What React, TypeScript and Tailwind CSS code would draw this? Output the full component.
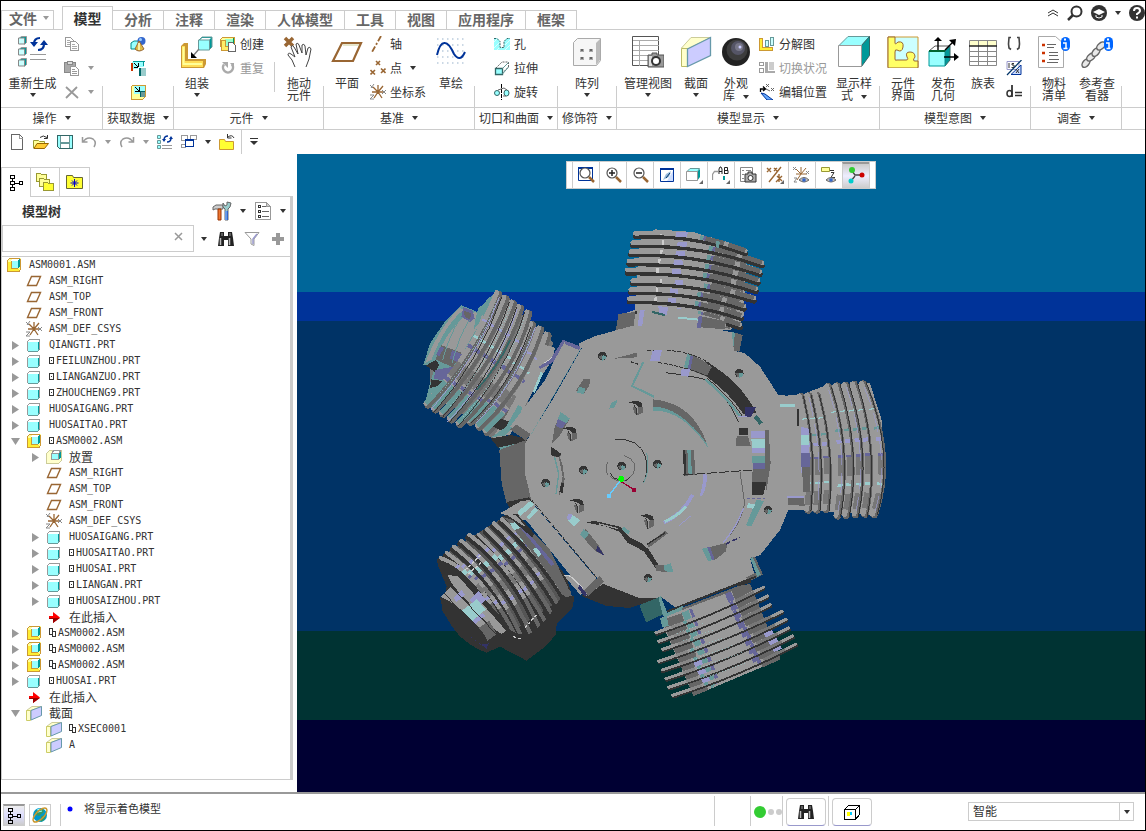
import type { ReactNode } from 'react';

/* ---------- Small drawing helpers ---------- */

function S({ children, smooth = false }: { children: ReactNode; smooth?: boolean }) {
  return (
    <svg viewBox="0 0 16 16" className="w-4 h-4 shrink-0" fill="none" shapeRendering={smooth ? 'auto' : 'crispEdges'} aria-hidden="true">
      {children}
    </svg>
  );
}

function L({ children }: { children: ReactNode }) {
  return <svg viewBox="0 0 32 32" className="w-8 h-8 shrink-0" fill="none" aria-hidden="true">{children}</svg>;
}

function Caret({ muted = false, inline = false }: { muted?: boolean; inline?: boolean }) {
  return (
    <svg viewBox="0 0 6 4" className={`w-1.5 h-1 shrink-0 ${inline ? 'inline-block ml-2' : ''}`} aria-hidden="true">
      <path d="M0 0h6L3 4z" fill={muted ? '#999' : '#333'} />
    </svg>
  );
}

/* ---------- 16px icons ---------- */

const PartIcon = () => (
  <S>
    <path d="M1 5V4l2-2h11v10l-2 3H1z" fill="#fff" />
    <path d="M12 5l2-2v9l-2 2z" fill="#099" />
    <path d="M2 5h10v9H2z" fill="#9ff" />
    <path d="M1.500 14V4.500l2-2h10V12" stroke="#999" />
    <path d="M1.500 14.500h10l2-2.500" stroke="#699" />
  </S>
);

const AsmIcon = () => (
  <S>
    <path d="M1 3l2-2h12v11l-2 3H1z" fill="#ff9" />
    <path d="M5 3l2-2h7v8l-2 2H5z" fill="#fff" />
    <path d="M6 4h6v7H6z" fill="#9ff" />
    <path d="M12 3l2-1v8l-2 1z" fill="#099" />
    <path d="M2 5h3v7h8v2H2z" fill="#fe3" />
    <path d="M1.500 14V3.500l2-2h10.500" stroke="#c93" />
    <path d="M1 14.500h12l1.500-2V2" stroke="#c93" />
    <path d="M5.500 4v7.500H12" stroke="#c93" />
  </S>
);

const PlaneIcon = () => (
  <S smooth><path d="M5.500 3.500h9l-4 9h-9z" stroke="#963" strokeWidth="1.400" /></S>
);

const CsysIcon = () => (
  <S smooth>
    <path d="M8 8V1M8 8l5-6M8 8h5M8 8l4 6M8 8H2M8 8l-4 6M3 3l5 5" stroke="#963" strokeWidth="1.300" />
    <path d="M0 1l3 3M4 0L1 4M12 6l4 4M16 6l-4 4M0 11h4l-4 4h4" stroke="#888" />
  </S>
);

const PlaceIcon = () => (
  <S>
    <path d="M.5 4.500l3-3h12v10l-3 3H.5z" fill="#ffc" stroke="#cc9" />
    <path d="M6 4l2-3h7l-2 3z" fill="#fff" stroke="#999" />
    <path d="M5.500 4.500h7v6h-7z" fill="#9ff" stroke="#999" />
    <path d="M13 4l2-2v6l-2 3z" fill="#099" />
  </S>
);

const InsertIcon = () => (
  <S smooth>
    <path d="M3 7h4V3l7 5.500L7 14v-4H3z" fill="#f00" />
    <path d="M3 9h11L7 14v-4H3z" fill="#900" />
  </S>
);

const SectionIcon = () => (
  <S smooth>
    <path d="M.5 5.500L6 1.500h9.500L5 5.500z" fill="#ffc" stroke="#cc9" />
    <path d="M.5 5.500h4v10h-4z" fill="#ffc" stroke="#cc6" />
    <path d="M5 5.500L15.500 1.500v9L5 15z" fill="#ccf" stroke="#69a" />
  </S>
);

const CopyIcon = () => (
  <S>
    <path d="M1.500 1.500h5l3 3v6h-8z" fill="#fff" stroke="#999" />
    <path d="M6.500 5.500h5l3 3v6h-8z" fill="#fff" stroke="#999" />
    <path d="M3 4.500h3M3 6.500h3M3 8.500h3M8 8.500h3M8 10.500h5M8 12.500h5" stroke="#aaa" />
  </S>
);

const PasteIcon = () => (
  <S>
    <path d="M.5 2.500h11v10H.5z" fill="#aaa" stroke="#888" />
    <path d="M3.500 1.500h5v3h-5z" fill="#ddd" stroke="#888" />
    <path d="M6.500 6.500h5l3 3v6h-8z" fill="#fff" stroke="#999" />
    <path d="M8 9.500h3M8 11.500h5M8 13.500h5" stroke="#999" />
  </S>
);

const DeleteIcon = () => <S smooth><path d="M2 3l12 11M13 3L2 14" stroke="#999" strokeWidth="1.800" /></S>;

const UserDataIcon = () => (
  <S smooth>
    <path d="M1 7l3-2h5v5l-2 3H1z" fill="#9ff" stroke="#088" />
    <circle cx="11.500" cy="5" r="4" fill="#36c" />
    <circle cx="10.500" cy="3.500" r="1.500" fill="#9cf" />
    <path d="M9 5l5 8q-5 4-9 0z" fill="#db4" stroke="#963" />
    <path d="M9 7v7" stroke="#ffc" strokeWidth="1.500" />
  </S>
);

const CopyGeomIcon = () => (
  <S>
    <path d="M1 3l2-2h11v8H1z" fill="#9ff" />
    <path d="M3 1.500h11.500M13 1v5" stroke="#099" />
    <path d="M1 3h2v8H1z" fill="#c30" />
    <path d="M4 3l4 4M8 3v4.500H4" stroke="#000" />
    <path d="M8 7h8v9H8z" fill="#fff" />
    <path d="M9 8h7v8H9z" fill="#9cc" />
    <path d="M9 8h2v8H9z" fill="#066" />
  </S>
);

const ShrinkwrapIcon = () => (
  <S>
    <path d="M1 3l2-2h12v12l-2 2H1z" fill="#ff9" stroke="#c93" />
    <path d="M4 2h11v8H4z" fill="#9ff" />
    <path d="M5 3l4 4M9 3v4.500H5" stroke="#000" />
    <path d="M10 7h5v6h-5z" fill="#066" />
    <path d="M11 8h4v5h-4z" fill="#699" />
  </S>
);

const CreateIcon = () => (
  <S>
    <path d="M.5 3.500l2-2h12v9H.5z" fill="#ff9" stroke="#c93" />
    <path d="M5 3h9v7H5z" fill="#9fc" />
    <path d="M13 2h1v8h-1z" fill="#096" />
    <path d="M1 4h4v6h4v4H1z" fill="#fe6" stroke="#c93" />
    <path d="M8.500 6.500h4l3 3v6h-7z" fill="#fff" stroke="#666" />
  </S>
);

const RepeatIcon = () => (
  <S smooth>
    <path d="M4 4.500a5 5 0 1 0 8 0" stroke="#aaa" strokeWidth="2.500" />
    <path d="M2 2h6v6zM10 3h4v5z" fill="#aaa" />
  </S>
);

const AxisIcon = () => <S smooth><path d="M11 0L2 16" stroke="#963" strokeWidth="1.800" strokeDasharray="6 2 2 2" /></S>;

const PointIcon = () => (
  <S smooth><path d="M6 1l4 4M10 1l-4 4M.5 10l4.500 4.500M5 10l-4.500 4.500M11 8.500l4.500 4.500M15.500 8.500L11 13" stroke="#963" strokeWidth="1.600" /></S>
);

const HoleIcon = () => (
  <S smooth>
    <path d="M0 2h3l3 3v9H0zM16 2h-3l-3 3v9h6z" fill="#9ff" />
    <path d="M6 12h4v2H6z" fill="#9ff" />
    <path d="M0 6l4-4M0 12l6-6M3 14l4-4M10 10l6-6M11 14l5-5" stroke="#dff" />
    <path d="M0 2.500h3l3 3v6h4v-6l3-3h3" stroke="#366" strokeDasharray="2 1" />
  </S>
);

const ExtrudeIcon = () => (
  <S smooth>
    <path d="M2 8l6-6h6.500v5l-6 6" fill="#fff" stroke="#666" strokeDasharray="2 1" />
    <path d="M1.500 8.500h7v6h-7z" fill="#9ff" stroke="#366" strokeWidth="1.300" />
    <path d="M8.500 8.500l6-6M8.500 14l6-7" stroke="#699" />
  </S>
);

const RevolveIcon = () => (
  <S smooth>
    <path d="M7.500 0v16" stroke="#000" strokeDasharray="4 1" />
    <ellipse cx="3" cy="9" rx="2.500" ry="2.500" fill="#9ff" stroke="#366" />
    <ellipse cx="12.500" cy="9" rx="2.500" ry="3" fill="#9ff" stroke="#366" />
    <path d="M4 6l6-2 3 2M9 12h3" stroke="#666" />
  </S>
);

const ExplodeIcon = () => (
  <S>
    <path d="M.5 2.500h3v9h10v3H.5z" fill="#fe3" stroke="#c93" />
    <path d="M6.500 4.500h3v6h-3zM11.500 1.500h3v8h-3z" fill="#cff" stroke="#699" />
  </S>
);

const ToggleStateIcon = () => (
  <S>
    <path d="M.5 2.500h4v3h-4zM.5 8.500h4v4h-4z" stroke="#999" />
    <path d="M6 2h3v9h7v2H6z" fill="#aaa" />
    <path d="M10 2h5v8h-5z" fill="#ccc" />
  </S>
);

const EditPosIcon = () => (
  <S smooth>
    <path d="M1.500 8V5h4M4 2.500L6.500 5 4 7" stroke="#000" strokeWidth="1.300" />
    <path d="M7 0l3 3M10 0L7 3M12 4l3 3M15 4l-3 3M7 5l4 2" stroke="#666" />
    <path d="M2 9l4 1 8 6H8z" fill="#6af" stroke="#039" />
  </S>
);

const ParensIcon = () => (
  <S smooth><path d="M5 1.500H3L2.500 8 3 12l2 1.500M11 1.500h2l.5 6.500-.5 4-2 1.500" stroke="#444" strokeWidth="1.600" /></S>
);

const SwitchDimIcon = () => (
  <S smooth>
    <path d="M1 1.500h12v8H1z" fill="#fff" stroke="#99c" />
    <path d="M3 3v5M8 3.500H6V5h2v2.500H5.500" stroke="#333" />
    <path d="M15 5v9.500H5z" fill="#cdf" stroke="#039" />
    <path d="M15.500 0L1 15" stroke="#036" strokeWidth="1.200" />
    <path d="M10 9l3 4M13 9l-3 4" stroke="#333" />
  </S>
);

const DimEqIcon = () => (
  <S smooth>
    <path d="M6 1v12" stroke="#333" strokeWidth="1.800" />
    <ellipse cx="3.500" cy="9.500" rx="2.500" ry="3" stroke="#333" strokeWidth="1.500" />
    <path d="M9 8.500h7M9 11.500h7" stroke="#333" strokeWidth="1.500" />
  </S>
);

/* Quick access bar */
const NewIcon = () => (
  <S><path d="M2.500.5h8l3 3v12h-11z" fill="#fff" stroke="#666" /><path d="M10.500 1v3h3" stroke="#999" /></S>
);

const OpenIcon = () => (
  <S smooth>
    <path d="M.5 14V6.500h5l1 1h5V14z" fill="#ff9" stroke="#993" />
    <path d="M1 14.500l3-5h11.500l-4 5z" fill="#fc3" stroke="#960" />
    <path d="M7 3.500q3-3 7 0M14.500 1v3.500H11" stroke="#333" />
  </S>
);

const SaveIcon = () => (
  <S>
    <path d="M.5 1.500h15v13h-13l-2-2z" fill="#9ff" stroke="#366" />
    <path d="M4 2h8v6H4zM4 10h8v4H4z" fill="#fff" />
    <path d="M3.500 2v6.500h9V2M3.500 14v-4.500h9V14" stroke="#699" />
  </S>
);

const UndoIcon = () => <S smooth><path d="M1.500 3v5h5M2 8q4-6 10-3 4 3 1 8" stroke="#999" strokeWidth="1.500" /></S>;
const RedoIcon = () => <S smooth><path d="M14.500 3v5h-5M14 8q-4-6-10-3-4 3-1 8" stroke="#999" strokeWidth="1.500" /></S>;

const RegenSmallIcon = () => (
  <S smooth>
    <path d="M.5 1.500h3v3h-3zM.5 6.500h3v3h-3zM.5 11.500h3v3h-3z" fill="#9ff" stroke="#699" />
    <path d="M7 6q0-4 4-4M14 4q0 4-4 4" stroke="#039" strokeWidth="1.500" />
    <path d="M5 5h4L7 8zM12 5h4l-2-3z" fill="#039" />
    <path d="M5 11.500h10M5 14.500h10" stroke="#999" />
  </S>
);

const WindowsIcon = () => (
  <S>
    <path d="M.5 1.500h6v5h-6zM9.500 1.500h6v4h-6zM.5 10.500h4v3h-4z" stroke="#999" />
    <path d="M0 1h7v1H0zM9 1h7v1H9z" fill="#999" />
    <path d="M4.500 5.500h8v7h-8z" fill="#fff" stroke="#039" />
    <path d="M4 5h9v2H4z" fill="#039" />
  </S>
);

const CloseFolderIcon = () => (
  <S smooth>
    <path d="M.5 15.500v-10h5l1 2h8v8z" fill="#ff3" stroke="#c93" />
    <path d="M15 4q-2-4-6-1M8.500 0v4h4" stroke="#333" />
  </S>
);

/* Navigator */
const TreeTabIcon = () => (
  <S><path d="M2.500.5h4v3h-4zM2.500 6.500h4v3h-4zM2.500 12.500h4v3h-4zM11.500 6.500h3v3h-3zM4.500 4v2M4.500 10v2M7 8.500h4" stroke="#000" /></S>
);

const FoldersIcon = () => (
  <svg viewBox="0 0 20 20" className="w-5 h-5" fill="#ff9" stroke="#993" shapeRendering="crispEdges" aria-hidden="true">
    <path d="M1.500 9.500v-8h4l1 1h5v7z" />
    <path d="M4.500 14.500v-8h4l1 1h5v7z" />
    <path d="M8.500 18.500v-8h4l1 1h5v7z" fill="#ff3" />
  </svg>
);

const FavoritesIcon = () => (
  <svg viewBox="0 0 20 18" className="w-5 h-5" fill="none" aria-hidden="true">
    <path d="M1.500 15.500v-13h6l1 2h9v11z" fill="#ff3" stroke="#663" />
    <path d="M9.500 6v8M5.500 10h8M7 7.500l5 5M12 7.500l-5 5" stroke="#00c" />
  </svg>
);

const ToolsIcon = () => (
  <svg viewBox="0 0 20 20" className="w-5 h-5" fill="none" aria-hidden="true">
    <path d="M1 6l3-2h7v4H6L3 8 1 9z" fill="#ccc" stroke="#666" />
    <path d="M6 8h3v11H6z" fill="#e73" stroke="#930" />
    <path d="M11 2l2 3 2-1V1l4 1-1 4-2 2v11h-3V8l-2-2z" fill="#9cc" stroke="#666" />
    <path d="M13 10h3v9h-3z" fill="#36c" />
    <path d="M14 10v9" stroke="#9cf" />
  </svg>
);

const ListIcon = () => (
  <svg viewBox="0 0 18 20" className="w-[18px] h-5" fill="none" shapeRendering="crispEdges" aria-hidden="true">
    <path d="M1.500 1.500h11l4 4v13h-15z" fill="#fff" stroke="#999" />
    <path d="M12.500 1.500v4h4z" fill="#ccc" stroke="#999" />
    <path d="M4.500 4.500h2v2h-2zM4.500 9.500h2v2h-2zM4.500 14.500h2v2h-2z" stroke="#333" />
    <path d="M8 5.500h4M8 10.500h7M8 15.500h7" stroke="#666" />
  </svg>
);

const BinocularsIcon = () => (
  <svg viewBox="0 0 18 16" className="w-[18px] h-4" aria-hidden="true">
    <path d="M3 1h4v4h4V1h4l1 6 1 8h-6v-6H7v6H1l1-8z" fill="#222" />
    <path d="M3.500 7v7M12.500 7v7" stroke="#bbb" strokeWidth="1.500" />
    <path d="M5 2v3M13 2v3" stroke="#999" />
  </svg>
);

const FilterIcon = () => (
  <S smooth>
    <path d="M1 1.500h14L10 8v6.500L7 13V8z" fill="#fff" stroke="#999" />
    <path d="M9 13V8l4-5" stroke="#99c" strokeWidth="1.500" />
  </S>
);

/* ---------- 32px ribbon icons ---------- */

const MiniCube = ({ y }: { y: number }) => (
  <g>
    <path d={`M2.500 ${y + 2}l2-1.500h5v6l-2 2`} fill="#099" stroke="#999" />
    <path d={`M1.500 ${y + 2}h6v6h-6z`} fill="#cff" stroke="#888" />
  </g>
);

const RegenerateIcon = () => (
  <L>
    <MiniCube y={0} /><MiniCube y={11} /><MiniCube y={22} />
    <path d="M17 8q0-6 6-6M21 14q6 0 6-6" stroke="#039" strokeWidth="2.200" />
    <path d="M13 6h8l-4 5zM23 9h8l-4-5z" fill="#039" />
    <path d="M13 18.500h16M13 23.500h16" stroke="#999" />
  </L>
);

const AssembleIcon = () => (
  <L>
    <path d="M0 10l3-3h4v16h18v5l-2 4H0z" fill="#c93" />
    <path d="M1 10h3v15h18v6H1z" fill="#fd5" />
    <path d="M2.500 11v17H21" stroke="#ff9" strokeWidth="2" />
    <path d="M18 4l3-3h10v10l-3 3z" fill="#099" stroke="#699" />
    <path d="M19 4l2-2h9l-2 2z" fill="#fff" />
    <path d="M17.500 4h11v10h-11z" fill="#9ff" stroke="#699" />
    <path d="M18 13l-6 7" stroke="#777" strokeWidth="1.300" />
    <path d="M10 22v-6l6 6z" fill="#000" />
  </L>
);

const DragIcon = () => (
  <L>
    <path d="M2 2l8 8M10 2l-8 8" stroke="#963" strokeWidth="3.500" />
    <path d="M12 31l-3-7-4-5q0-3 3-1l4 3-4-10q1-3 3 0l4 7-2-10q2-2 3 1l3 8 0-8q2-2 3 1l1 9 2-7q2-2 3 1l-2 10-3 8" fill="#fff" stroke="#444" />
  </L>
);

const BigPlaneIcon = () => (
  <L><path d="M11 7h19l-8 18H2z" fill="#fff" stroke="#963" strokeWidth="2.200" /><path d="M12 9h16" stroke="#cc9" /></L>
);

const SketchIcon = () => (
  <L>
    {[3, 9, 15, 21, 27].map(y => (
      <path key={y} d={`M2 ${y}h29`} stroke="#bcd" strokeWidth="1.500" strokeDasharray="1.500 3.500" />
    ))}
    <path d="M2 19Q5 6 10 7q4 0 9 11 6 9 11-2" stroke="#039" strokeWidth="2" />
  </L>
);

const PatternIcon = () => (
  <L>
    <path d="M2.500 6.500l4-4h23v22l-4 5h-23z" fill="#f6f6f6" stroke="#aaa" />
    <path d="M25 7l4-4v21l-4 5z" fill="#bbb" />
    <path d="M9 13h4v3H9zM18 13h4v3h-4zM9 21h4v3H9zM18 21h4v3h-4z" fill="#aaa" />
    <path d="M10 13h2v2h-2zM19 13h2v2h-2zM10 21h2v2h-2zM19 21h2v2h-2z" fill="#666" />
  </L>
);

const ViewsIcon = () => (
  <L>
    <path d="M.5.5h26v29H.5z" fill="#fff" stroke="#555" />
    <path d="M1 4.500h26M1 9.500h26M1 14.500h26M1 19.500h26M1 24.500h26M7.500 4v26" stroke="#aaa" />
    <path d="M16 19h4v-2h5v2h7v12H16z" fill="#999" stroke="#555" />
    <path d="M17 20h3v10h-3z" fill="#ddd" />
    <circle cx="24" cy="25" r="4" fill="#fff" stroke="#333" strokeWidth="2" />
  </L>
);

const BigSectionIcon = () => (
  <L>
    <path d="M1.500 12L11 1.500h20L7 13z" fill="#ffc" stroke="#cc9" />
    <path d="M1.500 12.500h6v18h-6z" fill="#ffc" stroke="#bb6" />
    <path d="M7.500 13L30.500 1.500v18L7.500 30.500z" fill="#ccf" stroke="#69a" strokeWidth="1.300" />
  </L>
);

const SphereIcon = () => (
  <L>
    <circle cx="16" cy="16" r="14" fill="#222" />
    <circle cx="17" cy="14" r="10.500" fill="#3c3c3c" />
    <circle cx="18" cy="12" r="7" fill="#556" />
    <circle cx="19" cy="11" r="4" fill="#778" />
    <circle cx="20" cy="11" r="1.500" fill="#ccf" />
  </L>
);

const DisplayStyleIcon = () => (
  <L>
    <path d="M1 9.500l9-9h21.500l-8 9z" fill="#9ff" stroke="#699" />
    <path d="M23.500 9.500l8-9v19l-8 11z" fill="#099" stroke="#366" />
    <path d="M.5 9.500h23v21H.5z" fill="#fff" stroke="#999" />
  </L>
);

const CompInterfaceIcon = () => (
  <L>
    <path d="M1 1h30v30H1z" fill="#cff" stroke="#c93" />
    <path d="M1 1h7v6q0 2 3-1 6-1 5 5t-6 3q-2-1-2 2v7q0 2 2 1h9q3 0 1-3-2-5 3-5t5 5q-3 4 0 4h3v7H1z" fill="#ff6" stroke="#963" />
  </L>
);

const PublishIcon = () => (
  <L>
    <path d="M2 15l6-5h15l-5 5z" fill="#fff" stroke="#555" />
    <path d="M18 15l5-5v14l-5 6z" fill="#099" stroke="#366" />
    <path d="M2 15h16v15H2z" fill="#9ff" stroke="#099" />
    <path d="M2 15h16" stroke="#063" strokeWidth="2" />
    <path d="M11 14V3M18 14l9-9M17 21h12" stroke="#000" strokeWidth="1.400" />
    <path d="M7 5l4-4 4 4zM22 4l7-1-1 7zM27 17l5 4-5 4z" fill="#000" />
  </L>
);

const FamilyTableIcon = () => (
  <L>
    <path d="M2 4h28v6H2z" fill="#ffc" />
    <path d="M2.500 4.500h27v25h-27zM2 15.500h28M2 20.500h28M2 25.500h28M11.500 4v26M20.500 4v26" stroke="#888" />
    <path d="M2 10h28" stroke="#222" strokeWidth="1.500" />
  </L>
);

const InfoBadge = () => (
  <g>
    <rect x="23" y="1" width="9" height="14" rx="4.500" fill="#06f" />
    <path d="M25 7h3v5M25.500 12.500h4" stroke="#fff" strokeWidth="1.500" />
    <path d="M26 3.500h2" stroke="#fff" strokeWidth="2" />
  </g>
);

const BomIcon = () => (
  <L>
    <path d="M.5.5h17l8 7v24H.5z" fill="#fff" stroke="#aaa" />
    <path d="M4 9h3M4 17h3M4 25h3" stroke="#c30" strokeWidth="2.500" />
    <path d="M9 8.500h9M9 11.500h7M11 16.500h9M11 19.500h9M11 23.500h10M9 26.500h11" stroke="#666" />
    <InfoBadge />
  </L>
);

const RefViewerIcon = () => (
  <L>
    <g stroke="#666" strokeWidth="1.500" fill="#e8e8e8">
      <ellipse cx="5" cy="27" rx="5" ry="3" transform="rotate(-50 5 27)" />
      <ellipse cx="10" cy="21" rx="5" ry="3" transform="rotate(-40 10 21)" />
      <ellipse cx="15" cy="16" rx="5" ry="3" transform="rotate(-50 15 16)" />
      <ellipse cx="20" cy="10" rx="5" ry="3" transform="rotate(-40 20 10)" />
    </g>
    <InfoBadge />
  </L>
);

/* ---------- Ribbon ---------- */

// textWidth makes a long label wrap on to a second line
function BigButton({ icon, label, menu = false, className, textWidth }: { icon: ReactNode; label: string; menu?: boolean; className: string; textWidth?: string }) {
  return (
    <button type="button" className={`flex flex-col items-center pt-1.5 shrink-0 leading-3 ${className}`}>
      {icon}
      <span className={`mt-[9px] ${textWidth ?? 'whitespace-nowrap'}`}>
        {label}
        {menu && textWidth && <Caret inline />}
      </span>
      {menu && !textWidth && <span className="flex h-3 items-center"><Caret /></span>}
    </button>
  );
}

function SmallButton({ icon, label, title, menu = false, muted = false }: { icon: ReactNode; label?: string; title?: string; menu?: boolean; muted?: boolean }) {
  return (
    <button type="button" aria-label={title} className={`flex h-6 items-center gap-1 whitespace-nowrap ${muted ? 'text-[#999]' : ''}`}>
      {icon}
      {label}
      {menu && <span className="ml-1"><Caret muted={muted} /></span>}
    </button>
  );
}

function Group({ label, className, children }: { label: string; className: string; children: ReactNode }) {
  return (
    <>
      <section className={`flex shrink-0 flex-col ${className}`}>
        <div className="flex h-[77px] overflow-hidden">{children}</div>
        <button type="button" className="flex h-[22px] items-center justify-center gap-2 border-t border-[#ccc] pb-0.5 whitespace-nowrap">
          {label}
          <Caret />
        </button>
      </section>
      <div className="h-[43px] w-px shrink-0 self-end bg-[#ccc]" />
    </>
  );
}

const tabs = ['分析', '注释', '渲染', '人体模型', '工具', '视图', '应用程序', '框架'];

function TabRow() {
  return (
    <nav className="flex h-[29px] items-end border-b border-[#ccc] text-sm font-bold text-[#666]">
      <button type="button" className="flex h-[19px] w-[53px] items-center gap-1.5 border-t border-r border-l border-[#ccc] pb-1 pl-[7px]">
        文件<Caret muted />
      </button>
      <button type="button" className="-mb-px ml-2 h-6 w-[51px] border border-b-0 border-[#ccc] bg-white pb-0.5 leading-4 text-[#333]">模型</button>
      {tabs.map(tab => (
        <button key={tab} type="button" className="h-[19px] border-t border-r border-[#ccc] px-[11px] pb-1 leading-4">
          {tab}
        </button>
      ))}
      <div className="ml-auto flex h-7 items-center self-start pb-1">
        <button type="button" aria-label="最小化功能区" className="mr-2">
          <svg viewBox="0 0 12 8" className="h-2 w-3" fill="none" stroke="#333" aria-hidden="true"><path d="M1 4l5-3 5 3M1 7l5-3 5 3" /></svg>
        </button>
        <button type="button" aria-label="搜索" className="mr-2">
          <svg viewBox="0 0 16 16" className="h-4 w-4" fill="none" stroke="#333" aria-hidden="true"><circle cx="9.500" cy="6.500" r="5" strokeWidth="2" /><path d="M6 10l-5 5" strokeWidth="2.500" /></svg>
        </button>
        <button type="button" aria-label="学习中心" className="mr-2">
          <svg viewBox="0 0 16 16" className="h-4 w-4" aria-hidden="true"><circle cx="8" cy="8" r="8" fill="#333" /><path d="M2 7l6-3 6 3-6 3z" fill="#fff" /><path d="M5 10v2l3 1 3-1v-2" fill="none" stroke="#fff" /></svg>
        </button>
        <span className="mr-2"><Caret /></span>
        <button type="button" aria-label="帮助">
          <svg viewBox="0 0 16 16" className="h-4 w-4" fill="none" aria-hidden="true"><circle cx="8" cy="8" r="8" fill="#333" /><path d="M5 6q0-3 3-3t3 3q0 1-3 3v1M8 11.500v2" stroke="#fff" strokeWidth="2" /></svg>
        </button>
      </div>
    </nav>
  );
}

function Ribbon() {
  return (
    <div className="flex shrink-0 overflow-hidden border-b border-[#ccc]">
      <Group label="操作" className="w-[101px]">
        <BigButton icon={<RegenerateIcon />} label="重新生成" menu className="w-[63px]" />
        <div className="flex flex-col pt-0.5">
          <SmallButton icon={<CopyIcon />} title="复制" muted />
          <SmallButton icon={<PasteIcon />} title="粘贴" menu muted />
          <SmallButton icon={<DeleteIcon />} title="删除" menu muted />
        </div>
      </Group>
      <Group label="获取数据" className="w-[70px]">
        <div className="flex w-full flex-col items-center pt-0.5">
          <SmallButton icon={<UserDataIcon />} title="用户定义特征" />
          <SmallButton icon={<CopyGeomIcon />} title="复制几何" />
          <SmallButton icon={<ShrinkwrapIcon />} title="收缩包络" />
        </div>
      </Group>
      <Group label="元件" className="w-[149px]">
        <BigButton icon={<AssembleIcon />} label="组装" menu className="w-[46px]" />
        <div className="flex w-[54px] flex-col pt-0.5">
          <SmallButton icon={<CreateIcon />} label="创建" />
          <SmallButton icon={<RepeatIcon />} label="重复" muted />
        </div>
        <div className="mt-8 h-[30px] w-px bg-[#ccc]" />
        <BigButton icon={<DragIcon />} label="拖动元件" className="w-12" textWidth="w-7" />
      </Group>
      <Group label="基准" className="w-[150px]">
        <BigButton icon={<BigPlaneIcon />} label="平面" className="w-[46px]" />
        <div className="flex w-[58px] flex-col pt-0.5">
          <SmallButton icon={<AxisIcon />} label="轴" />
          <SmallButton icon={<PointIcon />} label="点" menu />
          <SmallButton icon={<CsysIcon />} label="坐标系" />
        </div>
        <BigButton icon={<SketchIcon />} label="草绘" className="w-[46px]" />
      </Group>
      <Group label="切口和曲面" className="w-[82px]">
        <div className="flex flex-col pt-0.5 pl-[19px]">
          <SmallButton icon={<HoleIcon />} label="孔" />
          <SmallButton icon={<ExtrudeIcon />} label="拉伸" />
          <SmallButton icon={<RevolveIcon />} label="旋转" />
        </div>
      </Group>
      <Group label="修饰符" className="w-[58px]">
        <BigButton icon={<PatternIcon />} label="阵列" menu className="w-full" />
      </Group>
      <Group label="模型显示" className="w-[262px]">
        <BigButton icon={<ViewsIcon />} label="管理视图" menu className="w-[62px]" />
        <BigButton icon={<BigSectionIcon />} label="截面" menu className="w-[34px]" />
        <BigButton icon={<SphereIcon />} label="外观库" menu className="w-[46px]" textWidth="w-7" />
        <div className="flex w-[70px] flex-col pt-0.5">
          <SmallButton icon={<ExplodeIcon />} label="分解图" />
          <SmallButton icon={<ToggleStateIcon />} label="切换状况" muted />
          <SmallButton icon={<EditPosIcon />} label="编辑位置" />
        </div>
        <BigButton icon={<DisplayStyleIcon />} label="显示样式" menu className="w-[50px]" textWidth="w-10" />
      </Group>
      <Group label="模型意图" className="w-[150px]">
        <BigButton icon={<CompInterfaceIcon />} label="元件界面" className="w-[46px]" textWidth="w-7" />
        <BigButton icon={<PublishIcon />} label="发布几何" className="w-[34px]" textWidth="w-7" />
        <BigButton icon={<FamilyTableIcon />} label="族表" className="w-[46px]" />
        <div className="flex flex-col pt-0.5">
          <SmallButton icon={<ParensIcon />} title="参数" />
          <SmallButton icon={<SwitchDimIcon />} title="切换尺寸" />
          <SmallButton icon={<DimEqIcon />} title="关系" />
        </div>
      </Group>
      <Group label="调查" className="w-[90px]">
        <BigButton icon={<BomIcon />} label="物料清单" className="w-[46px]" textWidth="w-7" />
        <BigButton icon={<RefViewerIcon />} label="参考查看器" className="w-10" textWidth="w-10" />
      </Group>
      <div className="mt-[77px] flex-1 border-t border-[#ccc]" />
    </div>
  );
}

function QuickAccess() {
  return (
    <div className="flex h-6 shrink-0 items-center pl-2">
      <button type="button" aria-label="新建" className="mr-2"><NewIcon /></button>
      <button type="button" aria-label="打开" className="mr-2"><OpenIcon /></button>
      <button type="button" aria-label="保存" className="mr-2"><SaveIcon /></button>
      <button type="button" aria-label="撤消" className="mr-2 flex items-center gap-2"><UndoIcon /><Caret muted /></button>
      <button type="button" aria-label="重做" className="mr-2 flex items-center gap-2"><RedoIcon /><Caret muted /></button>
      <button type="button" aria-label="重新生成" className="mr-2"><RegenSmallIcon /></button>
      <button type="button" aria-label="窗口" className="mr-2 flex items-center gap-2"><WindowsIcon /><Caret /></button>
      <button type="button" aria-label="关闭" className="mr-1.5"><CloseFolderIcon /></button>
      <div className="h-6 w-px bg-[#ccc]" />
      <button type="button" aria-label="自定义" className="ml-2">
        <svg viewBox="0 0 8 8" className="h-2 w-2" aria-hidden="true"><path d="M0 0h8v1H0zM0 3h8L4 7z" fill="#333" /></svg>
      </button>
    </div>
  );
}

/* ---------- Model tree ---------- */

interface Node {
  level: number;
  icon: 'asm' | 'part' | 'plane' | 'csys' | 'place' | 'insert' | 'section';
  name: string;
  arrow?: 'open' | 'closed';
  mark?: 'box' | 'link';
}

const icons = {
  asm: AsmIcon,
  part: PartIcon,
  plane: PlaneIcon,
  csys: CsysIcon,
  place: PlaceIcon,
  insert: InsertIcon,
  section: SectionIcon,
};

const nodes: Node[] = [
  { level: 0, icon: 'asm', name: 'ASM0001.ASM' },
  { level: 1, icon: 'plane', name: 'ASM_RIGHT' },
  { level: 1, icon: 'plane', name: 'ASM_TOP' },
  { level: 1, icon: 'plane', name: 'ASM_FRONT' },
  { level: 1, icon: 'csys', name: 'ASM_DEF_CSYS' },
  { level: 1, icon: 'part', name: 'QIANGTI.PRT', arrow: 'closed' },
  { level: 1, icon: 'part', name: 'FEILUNZHOU.PRT', arrow: 'closed', mark: 'box' },
  { level: 1, icon: 'part', name: 'LIANGANZUO.PRT', arrow: 'closed', mark: 'box' },
  { level: 1, icon: 'part', name: 'ZHOUCHENG9.PRT', arrow: 'closed', mark: 'box' },
  { level: 1, icon: 'part', name: 'HUOSAIGANG.PRT', arrow: 'closed' },
  { level: 1, icon: 'part', name: 'HUOSAITAO.PRT', arrow: 'closed' },
  { level: 1, icon: 'asm', name: 'ASM0002.ASM', arrow: 'open', mark: 'box' },
  { level: 2, icon: 'place', name: '放置', arrow: 'closed' },
  { level: 2, icon: 'plane', name: 'ASM_RIGHT' },
  { level: 2, icon: 'plane', name: 'ASM_TOP' },
  { level: 2, icon: 'plane', name: 'ASM_FRONT' },
  { level: 2, icon: 'csys', name: 'ASM_DEF_CSYS' },
  { level: 2, icon: 'part', name: 'HUOSAIGANG.PRT', arrow: 'closed' },
  { level: 2, icon: 'part', name: 'HUOSAITAO.PRT', arrow: 'closed', mark: 'box' },
  { level: 2, icon: 'part', name: 'HUOSAI.PRT', arrow: 'closed', mark: 'box' },
  { level: 2, icon: 'part', name: 'LIANGAN.PRT', arrow: 'closed', mark: 'box' },
  { level: 2, icon: 'part', name: 'HUOSAIZHOU.PRT', arrow: 'closed', mark: 'box' },
  { level: 2, icon: 'insert', name: '在此插入' },
  { level: 1, icon: 'asm', name: 'ASM0002.ASM', arrow: 'closed', mark: 'link' },
  { level: 1, icon: 'asm', name: 'ASM0002.ASM', arrow: 'closed', mark: 'link' },
  { level: 1, icon: 'asm', name: 'ASM0002.ASM', arrow: 'closed', mark: 'link' },
  { level: 1, icon: 'part', name: 'HUOSAI.PRT', arrow: 'closed', mark: 'box' },
  { level: 1, icon: 'insert', name: '在此插入' },
  { level: 1, icon: 'section', name: '截面', arrow: 'open' },
  { level: 2, icon: 'section', name: 'XSEC0001', mark: 'link' },
  { level: 2, icon: 'section', name: 'A' },
];

function TreeRow({ node }: { node: Node }) {
  const Icon = icons[node.icon];
  const isLatin = /^[A-Z]/.test(node.name);
  return (
    <li className={`flex h-4 items-center ${node.level === 2 ? 'pl-6' : 'pl-1'}`}>
      {node.level > 0 && (
        <span className="flex w-5 justify-center pr-0.5">
          {node.arrow && (
            <button type="button" aria-label={node.arrow === 'open' ? '折叠' : '展开'}>
              <svg viewBox="0 0 9 9" className="h-[9px] w-[9px]" fill="#999" aria-hidden="true">
                <path d={node.arrow === 'open' ? 'M0 1h9L4.500 8z' : 'M1 0v9l7-4.500z'} />
              </svg>
            </button>
          )}
        </span>
      )}
      <Icon />
      <span className={`ml-[7px] flex items-center whitespace-nowrap ${isLatin ? 'font-["DejaVu_Sans_Mono",monospace] text-[10px]' : 'text-xs'}`}>
        {node.mark === 'box' && (
          <svg viewBox="0 0 7 8" className="h-2 w-[7px]" fill="none" stroke="#333" shapeRendering="crispEdges" aria-hidden="true">
            <path d="M.5.5h4v6h-4zM2 3.500h1" />
          </svg>
        )}
        {node.mark === 'link' && (
          <svg viewBox="0 0 9 9" className="h-[9px] w-[9px]" fill="none" stroke="#333" shapeRendering="crispEdges" aria-hidden="true">
            <path d="M3.500 3V.5h-3v6h2M3.500 3.500h3v5h-3z" />
          </svg>
        )}
        {node.name}
      </span>
    </li>
  );
}

function Navigator() {
  return (
    <aside className="flex w-[296px] shrink-0 flex-col pt-[13px] pr-1 pb-3">
      <div className="flex h-[30px]">
        <button type="button" aria-label="模型树" className="flex w-[29px] items-center justify-center border-t border-l border-[#ccc]"><TreeTabIcon /></button>
        <button type="button" aria-label="文件夹浏览器" className="flex w-[30px] items-center justify-center border border-[#ccc]"><FoldersIcon /></button>
        <button type="button" aria-label="收藏夹" className="flex w-[30px] items-center justify-center border border-l-0 border-[#ccc]"><FavoritesIcon /></button>
        <div className="flex-1 border-b border-[#ccc]" />
      </div>
      <div className="flex flex-1 flex-col border-r-[3px] border-b border-l border-[#ccc]">
        <div className="flex h-7 items-center pr-1 pl-5">
          <h2 className="flex-1 text-[13px] font-bold">模型树</h2>
          <button type="button" aria-label="设置" className="mr-2 flex items-center gap-2"><ToolsIcon /><Caret /></button>
          <button type="button" aria-label="显示" className="flex items-center gap-2"><ListIcon /><Caret /></button>
        </div>
        <div className="flex items-center">
          <div className="flex h-[27px] w-48 items-center border border-[#ccc]">
            <input type="text" aria-label="搜索模型树" className="h-full min-w-0 flex-1 px-1 outline-none" />
            <button type="button" aria-label="清除" className="mr-2.5 mb-1">
              <svg viewBox="0 0 9 9" className="h-[9px] w-[9px]" stroke="#999" strokeWidth="1.500" aria-hidden="true"><path d="M1 1l7 7M8 1L1 8" /></svg>
            </button>
          </div>
          <button type="button" aria-label="搜索选项" className="mr-2.5 ml-[7px]"><Caret /></button>
          <button type="button" aria-label="查找" className="mr-[9px]"><BinocularsIcon /></button>
          <button type="button" aria-label="过滤器" className="mr-3"><FilterIcon /></button>
          <button type="button" aria-label="添加">
            <svg viewBox="0 0 12 12" className="h-3 w-3" stroke="#999" strokeWidth="4" aria-hidden="true"><path d="M6 0v12M0 6h12" /></svg>
          </button>
        </div>
        <ul className="mt-1 flex-1 border-t border-[#ccc]">
          {nodes.map((node, i) => <TreeRow key={i} node={node} />)}
        </ul>
      </div>
    </aside>
  );
}

/* ---------- Engine model ---------- */

// x1, y1, control x, control y, x2, y2
type Fin = [number, number, number, number, number, number];
// start, length (percent along the fin), colour
type Band = [number, number, string];

function Fins({ fins, width, shade, dx, dy, bands, shadow = '#333' }: { fins: Fin[]; width: number; shade: number; dx: number; dy: number; bands: Band[]; shadow?: string }) {
  return (
    <g fill="none" strokeLinecap="round">
      {fins.map(([x1, y1, cx, cy, x2, y2], i) => {
        const d = `M${x1} ${y1}Q${cx} ${cy} ${x2} ${y2}`;
        return (
          <g key={i}>
            <path d={d} transform={`translate(${dx} ${dy})`} stroke={shadow} strokeWidth={shade} />
            <path d={d} stroke="#999" strokeWidth={width} />
            {bands.map(([start, len, color], j) => (
              <path key={j} d={d} pathLength={100} stroke={color} strokeWidth={width} strokeLinecap="butt" strokeDasharray={`0 ${start} ${len} 200`} />
            ))}
          </g>
        );
      })}
    </g>
  );
}

const topFins: Fin[] = [
  [684, 268, 850, 262, 990, 314],
  [658, 236, 840, 232, 994, 286],
  [662, 209, 850, 204, 1002, 258],
  [668, 182, 860, 178, 1032, 234],
  [652, 150, 860, 144, 1038, 206],
  [657, 123, 860, 116, 1044, 180],
  [663, 95, 860, 88, 1050, 154],
  [668, 68, 870, 60, 1056, 128],
  [676, 40, 850, 30, 1006, 92],
];

const upperLeftFins: Fin[] = [
  [408, 342, 350, 520, 226, 632],
  [386, 324, 330, 500, 202, 616],
  [362, 310, 300, 490, 176, 602],
  [350, 276, 300, 460, 144, 608],
  [326, 260, 260, 450, 118, 594],
  [304, 246, 240, 430, 94, 578],
  [282, 232, 210, 420, 70, 564],
  [260, 218, 190, 400, 48, 550],
];

const rightFins: Fin[] = [
  [1168, 528, 1210, 700, 1190, 868],
  [1192, 526, 1236, 700, 1216, 868],
  [1216, 524, 1264, 700, 1244, 866],
  [1250, 498, 1316, 700, 1278, 886],
  [1276, 496, 1342, 700, 1304, 884],
  [1302, 494, 1372, 700, 1332, 882],
  [1328, 492, 1398, 700, 1360, 880],
  [1354, 490, 1450, 700, 1388, 882],
];

const lowerLeftFins: Fin[] = [
  [298, 890, 400, 1000, 478, 1120],
  [276, 898, 390, 1000, 468, 1132],
  [252, 910, 360, 1010, 448, 1160],
  [230, 928, 340, 1030, 430, 1190],
  [206, 944, 320, 1050, 410, 1212],
  [178, 944, 310, 1040, 392, 1232],
  [154, 962, 290, 1070, 366, 1252],
  [132, 980, 260, 1080, 340, 1262],
  [110, 998, 240, 1090, 318, 1252],
  [92, 1014, 200, 1050, 284, 1230],
];

const lowerRightFins: Fin[] = [
  [738, 1238, 900, 1184, 1060, 1102],
  [746, 1264, 910, 1210, 1072, 1128],
  [758, 1288, 920, 1236, 1080, 1154],
  [746, 1324, 930, 1264, 1116, 1174],
  [756, 1350, 940, 1292, 1128, 1198],
  [768, 1376, 950, 1318, 1136, 1224],
  [776, 1402, 960, 1344, 1148, 1248],
  [788, 1426, 970, 1368, 1158, 1272],
];

const holes = [[577, 408], [988, 460], [742, 732], [520, 750], [407, 789], [635, 738], [1074, 870], [714, 1074]];
const bolts = [[678, 562], [480, 640], [502, 856], [712, 902]];

function EngineModel() {
  return (
    <svg viewBox="297 154 848 638" preserveAspectRatio="xMidYMid slice" className="absolute inset-0 h-full w-full" role="img" aria-label="发动机装配模型" shapeRendering="crispEdges">
      <rect x="297" y="154" width="848" height="138" fill="#069" />
      <rect x="297" y="292" width="848" height="29" fill="#039" />
      <rect x="297" y="321" width="848" height="310" fill="#036" />
      <rect x="297" y="631" width="848" height="89" fill="#033" />
      <rect x="297" y="720" width="848" height="72" fill="#003" />

      {/* Drawn at three times the screen size */}
      <g transform="translate(410 220) scale(.33333)">
        {/* Top cylinder */}
        <path d="M625 285L675 270 690 60 735 28 850 36 920 60 1010 95 1000 300 960 330 620 330z" fill="#999" />
        <path d="M920 62L1012 95 1000 210 960 326 880 318 905 190z" fill="#666" />
        <path d="M625 282L675 276 672 318 618 330z" fill="#666" />
        <Fins fins={topFins} width={14} shade={16} dx={0} dy={9} bands={[[22, 2, '#ccc'], [34, 7, '#99c'], [58, 3, '#699'], [61, 2, '#669'], [63, 37, '#666'], [80, 4, '#999']]} />
        <path d="M735 28L790 32 800 38 830 42 828 52 796 50 735 38z" fill="#999" />
        <path d="M800 36h34l-4 16h-34z" fill="#99c" />
        <path d="M918 62l12 3-4 20-8-4z" fill="#699" />
        <path d="M682 262L770 258 880 285 950 305 945 330 675 322z" fill="#999" />
        <path d="M690 270h14l-8 52h-14zM745 258l30 4-6 24-22-4z" fill="#99c" />
        <path d="M725 272l40 10v7l-40-10z" fill="#366" />
        <path d="M805 290l60 6v6l-60-6z" fill="#9cc" />
        <path d="M866 288l12 2-4 36h-14z" fill="#669" />
        <path d="M878 290l70 14-4 24-72-6z" fill="#666" />

        {/* Right cylinder */}
        <path d="M1100 530L1180 522 1250 495 1380 490 1415 600 1420 740 1390 885 1180 870 1135 870z" fill="#999" />
        <Fins fins={rightFins} width={15} shade={22} dx={5} dy={2} shadow="#666" bands={[[20, 1, '#9cc'], [34, 2, '#699'], [42, 3, '#99c'], [54, 2, '#669'], [56, 14, '#777'], [76, 2, '#9cc'], [84, 12, '#777']]} />
        <g fill="none" stroke="#333" strokeWidth="3">
          <path d="M1368 486Q1455 700 1402 885M1342 488Q1408 700 1372 890M1316 490Q1384 700 1345 890M1290 492Q1354 700 1318 890M1264 500Q1326 700 1292 890M1228 524Q1276 700 1258 872M1204 526Q1248 700 1230 872M1180 528Q1222 700 1203 872" />
        </g>
        <g fill="none" stroke="#99c" strokeWidth="2" strokeDasharray="60 24">
          <path d="M1362 500Q1446 700 1396 872M1309 500Q1376 700 1338 872M1256 510Q1318 700 1284 872M1196 530Q1240 700 1222 860" />
        </g>

        {/* Upper left cylinder */}
        <path d="M235 240L262 215 410 350 430 370 330 600 245 655 60 500 60 440z" fill="#777" />
        <path d="M155 256L200 275 235 235 262 215 200 420 90 560 45 550 60 490 75 440 40 435 60 370 105 305z" fill="#699" />
        <path d="M150 264Q90 316 46 428L64 420Q104 316 160 270z" fill="#999" />
        <path d="M160 290Q112 340 94 380L150 420Q180 350 226 290L196 276z" fill="#999" />
        <path d="M160 262l28 10 6 24-14 10-26-16z" fill="#669" />
        <path d="M162 272l22 8-4 18-16-8z" fill="#666" />
        <path d="M206 262l22-14-20 60-16 20 4-30z" fill="#699" />
        <path d="M94 376l60 22-26 44-52-24z" fill="#666" />
        <path d="M90 380l12 4-14 24-10-4zM126 390l32 14-14 24-24-12z" fill="#669" />
        <path d="M150 296Q116 350 98 420M178 300Q146 350 126 430" fill="none" stroke="#699" strokeWidth="3" />
        <path d="M48 436l30-16 10 14-12 22-14-8zM64 478l50 8-20 10-34 8z" fill="#333" />
        <path d="M76 450l54-10-16 44-42-8z" fill="#669" />
        <Fins fins={upperLeftFins} width={15} shade={22} dx={6} dy={5} shadow="#666" bands={[[22, 2, '#99c'], [36, 2, '#9cc'], [44, 3, '#669'], [60, 12, '#777'], [74, 3, '#669'], [78, 22, '#699']]} />
        <g fill="none" stroke="#99c" strokeWidth="3">
          <path d="M268 232Q206 410 62 570M322 268Q262 450 112 606M376 322Q314 500 196 610" />
        </g>
        <g fill="none" stroke="#333" strokeWidth="3">
          <path d="M275 232Q210 420 70 580M298 246Q236 430 95 595M320 262Q262 445 118 608M345 275Q286 462 145 618M362 322Q300 500 185 608" />
        </g>
        <path d="M300 360Q270 430 200 510" fill="none" stroke="#366" strokeWidth="5" />
        <g fill="none" stroke="#9cc" strokeWidth="2" strokeDasharray="4 5">
          <path d="M262 240Q200 400 90 520M300 262Q240 420 120 560M340 300Q290 450 160 590M370 330Q310 500 200 600" />
        </g>
        <path d="M405 375l30 8-10 40-40 60-48 90-36 70-55 15 30-50z" fill="#999" />
        <path d="M392 455l8 4-26 60-6-4z" fill="#9cc" />
        <path d="M400 430l38-28 8 4-38 28z" fill="#ccc" />
        <path d="M250 620l22-24 24 8-12 34zM242 655l60-10 58 14-8 20-86 6z" fill="#333" />
        <path d="M325 555l12 8-16 44-36 40-40 4 42-30z" fill="#699" />
        <path d="M268 682l82-18-2 22-76 14z" fill="#699" />

        {/* Lower left cylinder */}
        <path d="M85 1015L250 910 320 880 470 1070 490 1145 487 1165 440 1210 438 1240 405 1280 350 1322 270 1280 230 1298 150 1250 95 1170 110 1100 85 1040z" fill="#333" />
        <path d="M110 998L300 880 420 1010 480 1120 300 1240z" fill="#555" />
        <Fins fins={lowerLeftFins} width={12} shade={16} dx={-4} dy={9} bands={[[18, 3, '#99c'], [26, 5, '#9cc'], [34, 3, '#669'], [46, 10, '#777'], [62, 3, '#99c'], [70, 30, '#666']]} />
        <path d="M494 1130L462 1118 440 1152 420 1184 400 1206 380 1228 352 1246 320 1240 286 1222 262 1262 350 1322 380 1290 405 1280 438 1244 440 1212 487 1165z" fill="#333" />
        <path d="M280 888l30-10 110 110 66 140-20 4-80-110z" fill="#666" />
        <path d="M300 910l18-4 14 18-20 6zM368 988l20-10 12 18-14 16z" fill="#9cc" />
        <path d="M318 908l16 6 100 118-10 6z" fill="#669" />
        <path d="M112 1064l34 6 146 160-18 12-30-20-114-124z" fill="#999" />
        <path d="M146 1070l20 0 132 150-8 14z" fill="#333" />
        <path d="M180 1140l26-26 22 24-26 26z" fill="#99c" />
        <path d="M92 1130l30-30 136 140-30 24z" fill="#999" />
        <path d="M200 1228l38-26 22 40-32 24z" fill="#666" />
        <path d="M156 1172l44-34 28 30-40 34z" fill="#9cc" />
        <path d="M130 1134l24-24 12 14-26 22z" fill="#99c" />
        <path d="M188 1202l30-24 8 10-30 24z" fill="#99c" />
        <path d="M104 1120l120 136M124 1100l136 144" stroke="#333" strokeWidth="3" />
        <path d="M90 1132Q100 1200 160 1258 200 1290 232 1298 250 1270 200 1216 130 1140 90 1132z" fill="#333" />
        <path d="M158 1232l54 42 24-4-6 16z" fill="#336" />
        <path d="M165 1050l48-46M175 1062l40-36M345 1222l34-36M310 1250l24 8" stroke="#ccc" strokeWidth="4" strokeDasharray="9 5" />

        {/* Lower right cylinder */}
        <path d="M750 1195L1020 1090 1112 1318 850 1428z" fill="#999" />
        <path d="M755 1200l60-20 80 230-45 18zM965 1114l55-24 92 228-54 24z" fill="#666" />
        <path d="M815 1178l20-8 84 220-14 16zM750 1196l20-8 6 30-18 4z" fill="#699" />
        <path d="M838 1168l8-2 84 220-10 6zM945 1122l18-8 90 216-18 12z" fill="#669" />
        <path d="M846 1320l24-10 34 80-20 10zM1060 1240l26-10 30 56-24 10z" fill="#99c" />
        <Fins fins={lowerRightFins} width={9} shade={9} dx={2} dy={5} bands={[[14, 9, '#888'], [25, 3, '#699'], [68, 3, '#669'], [73, 18, '#777']]} />
        <g stroke="#9cc" strokeWidth="2" strokeDasharray="3 7">
          <path d="M800 1240l80-30M820 1262l90-32M840 1290l100-36M850 1318l120-42M860 1346l140-50M880 1374l130-46" />
        </g>

        {/* Crankcase */}
        <path d="M268 690L348 660 370 840 290 850 275 790z" fill="#666" />
        <path d="M290 846L355 832 375 845 305 880z" fill="#333" />
        <path d="M515 1128L580 1090 740 1130 740 1136 660 1164 590 1158z" fill="#333" />
        <path d="M965 335l33 10-10 50-22-2z" fill="#666" />
        <path d="M965 335l10 4-6 52-6-2z" fill="#699" />
        <path d="M462 362L515 382 420 545 358 655 345 640 300 620 405 480z" fill="#999" />
        <path d="M458 360l8 2-36 64-40 22-4-8 34-20zM466 362l46 18-6 10-42-18z" fill="#669" />
        <path d="M300 628l20-14 42 28-14 20z" fill="#666" />
        <path d="M515 385L505 372 550 350 665 318 905 325 965 337 972 392 1005 400 1050 440 1105 525 1170 530 1175 815 1183 860 1135 870 1110 930 1050 1006 1020 1015 1035 1070 800 1165 755 1132 690 1135 575 1090 365 845 345 760 345 670 430 535z" fill="#999" />
        <path d="M512 388L362 645" stroke="#699" strokeWidth="2" strokeDasharray="7 4" />
        <path d="M270 880l62-36 28-4 215 254-45 34-180-226z" fill="#999" />
        <path d="M365 840L578 1094" stroke="#333" strokeWidth="3" strokeDasharray="12 4" />
        <path d="M322 876l40-34 10 12-42 34zM350 892l24-30 10 10-26 26z" fill="#9cc" />
        <path d="M272 888l50-6 52 60-8 10-60-52z" fill="#333" />
        <path d="M290 884l28 2 30 34-14-6z" fill="#999" />
        <path d="M460 1064l20 2 42 42-10 18-34-40z" fill="#999" />
        <path d="M462 1066l18 2 38 36" fill="none" stroke="#ccc" strokeWidth="4" />
        <path d="M522 1110l46-42 14 16-46 44z" fill="#666" />
        <path d="M508 1094l24 30-8 6-20-26z" fill="#336" />
        <path d="M688 1155l66-26 14 50-60 28z" fill="#366" />
        <path d="M752 1128l16 40 4 10-14 6-12-50z" fill="#699" />
        <path d="M1035 1010l24 54-44 22-6-14 34-16-20-44z" fill="#666" />
        <path d="M1020 1014l8-2 24 52-10 6z" fill="#699" />
        <path d="M770 1175L1038 1070" stroke="#333" strokeWidth="6" />
        <path d="M758 1184l60-26 4 10-58 24z" fill="#699" />
        <path d="M815 1164l190-74 2 8-190 72z" fill="#666" />
        <path d="M980 1094l44-18v12l-44 12z" fill="#333" />
        <path d="M1132 828h50l2 30-50-4z" fill="#666" />
        <path d="M1132 828h50v6h-50z" fill="#99c" />
        <path d="M1110 553h46v7h-46z" fill="#9cc" />
        <path d="M1160 568h7v50h-7z" fill="#333" />
        <path d="M1172 620l24 6 4 130-28 4z" fill="#99c" />
        <path d="M1172 645h24v30h-24z" fill="#9cc" />
        <path d="M1173 700h26v40h-26z" fill="#669" />
        <path d="M1176 742h24v74h-20z" fill="#666" />

        {/* Ring slot */}
        <path d="M612 416l68-18v14z" fill="#666" />
        <path d="M690 393Q860 380 930 450 1050 540 1077 660L1080 740Q1075 830 1020 918L1008 914Q1035 830 1026 740L1020 650Q1000 590 940 520 880 450 790 440L690 422z" fill="#999" />
        <path d="M728 390h28l-8 34h-28z" fill="#99c" />
        <path d="M832 402Q870 410 905 442L900 474 826 444z" fill="#666" />
        <path d="M832 402l10 4-8 40-12-4z" fill="#699" />
        <path d="M842 406l7 3-8 40-8-3z" fill="#669" />
        <path d="M880 420Q990 480 1040 580L1000 582Q960 520 890 470L905 442z" fill="#333" />
        <path d="M1006 562h32l-14 28h-20z" fill="#336" />
        <path d="M890 474Q960 530 998 590M768 458Q860 470 888 480 950 520 985 605" fill="none" stroke="#333" strokeWidth="3" />
        <path d="M886 478Q950 530 990 590" fill="none" stroke="#699" strokeWidth="7" />
        <path d="M815 448h26l-6 22-24-4z" fill="#99c" />
        <path d="M712 392h20M770 391Q850 395 905 435M745 428Q830 440 900 472" fill="none" stroke="#333" strokeWidth="3" strokeDasharray="12 4" />
        <path d="M1040 584l18 24-10 6-16-20z" fill="#366" />
        <path d="M980 648h34l8 30h-44z" fill="#666" />
        <path d="M988 590l24 0 4 28-26 6z" fill="#999" />
        <path d="M984 590h26" stroke="#99c" strokeWidth="4" />
        <path d="M986 624h28v20h-28z" fill="#333" />
        <path d="M1022 634h42l6 20h-46z" fill="#99c" />
        <path d="M1024 656h46l4 28h-48z" fill="#9cc" />
        <path d="M1026 684h48l1 16h-49z" fill="#99c" />
        <path d="M1027 708h48v20h-48z" fill="#699" />
        <path d="M1028 728h48l-2 20h-46z" fill="#669" />
        <path d="M1028 748h47l-3 40h-46z" fill="#666" />
        <path d="M1026 786h44l-10 38h-34z" fill="#333" />
        <path d="M1064 630l12 0 6 100-14 90z" fill="#666" />
        <path d="M1040 838l22 6-38 74-16-2z" fill="#699" />
        <path d="M1014 850l22 2-6 14-20-2z" fill="#9cc" />
        <path d="M1010 836h56" stroke="#669" strokeWidth="5" strokeDasharray="10 6" />
        <path d="M990 755L1004 850Q990 920 945 960" fill="none" stroke="#666" strokeWidth="3" />
        <path d="M1000 865Q980 920 940 968" fill="none" stroke="#99c" strokeWidth="4" />
        <path d="M880 986l72-18-4 26-34 26-20-8z" fill="#666" />
        <path d="M876 986l16-4 18 38-16 4z" fill="#699" />
        <path d="M892 982l8-2 14 38-8 2z" fill="#669" />
        <path d="M948 972l42-20" stroke="#336" strokeWidth="5" strokeDasharray="14 8" />

        {/* Face details */}
        <path d="M662 425l28 10" stroke="#333" strokeWidth="4" strokeDasharray="10 5" />
        <path d="M700 426l-34 72 66 32" fill="none" stroke="#699" strokeWidth="6" />
        <path d="M730 538Q850 550 896 686 820 570 730 572z" fill="#699" />
        <path d="M730 538Q850 550 890 670 810 560 730 560z" fill="#666" />
        <path d="M820 690h32l4 74-34 4z" fill="#666" />
        <path d="M820 690h6l3 76-8 1z" fill="#333" />
        <path d="M832 690h10l4 74-10 2z" fill="#699" />
        <path d="M820 765L1028 750" stroke="#333" strokeWidth="3" strokeDasharray="28 8" />
        <path d="M880 762Q880 800 868 828L878 826Q890 800 892 764z" fill="#99c" />
        <path d="M848 824Q820 880 762 908" fill="none" stroke="#99c" strokeWidth="11" />
        <path d="M828 860Q800 890 764 905" fill="none" stroke="#9cc" strokeWidth="9" />
        <path d="M842 888l-34 28" stroke="#99c" strokeWidth="3" />
        <path d="M520 478l20 -2-2 22-16 22-24-8z" fill="#666" />
        <path d="M508 500l18 6-4 16-22-4zM604 548l20-10-10 24-16 4z" fill="#699" />
        <path d="M454 578l26 18-30 50-24 24 8-50z" fill="#666" />
        <path d="M452 576l28 20-12 14-24-14z" fill="#699" />
        <path d="M444 596l24 14-12 16-18-8z" fill="#669" />
        <path d="M424 680l30 22-4 10 8 26 6 40-16 50-10-20 10-40-12-46z" fill="#666" />
        <path d="M424 680l30 22-8 10-22-6zM440 786l22 4-4 30-16-8z" fill="#333" />
        <path d="M432 710h14l12 60-12 54-8-20 4-50z" fill="#999" />
        <path d="M434 712l12 50-8 60" fill="none" stroke="#699" strokeWidth="4" />
        <path d="M486 884l24 16-18 20-18-20z" fill="#9cc" />
        <path d="M476 880l12 4-10 18-8-6z" fill="#99c" />
        <path d="M526 926l40 50 18 32-26-14-48-50z" fill="#666" />
        <path d="M520 928l18 12-14 18-14-14z" fill="#699" />
        <path d="M562 976l22 32-26-16z" fill="#336" />
        <path d="M530 908l20-6 80 18 26 30 36 18 24 20 34 54-10 8-38-56-50-26-22-32-40-16z" fill="#333" />
        <path d="M568 912l56 14M650 938l24 18" stroke="#999" strokeWidth="4" />
        <path d="M640 920l20 14-6 10-20-16z" fill="#699" />
        <path d="M714 978l56-42" stroke="#666" strokeWidth="11" />
        <path d="M710 974l56-36" stroke="#333" strokeWidth="4" />
        <path d="M736 1036h44l10 20-52-2z" fill="#666" />
        <path d="M762 1036l20-6 8 26-26-2z" fill="#699" />
        <g fill="none" stroke="#333" strokeWidth="3">
          <path d="M614 658Q690 655 706 710 718 750 700 790" />
          <path d="M642 706Q690 725 668 764 640 800 600 770M592 765Q585 745 592 725" stroke="#666" />
          <path d="M600 758Q610 780 635 780M660 772L645 784" />
        </g>
        <path d="M710 700Q722 750 700 790" fill="none" stroke="#699" strokeWidth="3" />

        {holes.map(([x, y]) => (
          <g key={`${x}-${y}`}>
            <circle cx={x} cy={y} r="13" fill="#333" />
            <path d={`M${x - 8} ${y + 2}l10 -4 9 2 -1 8 -10 6z`} fill="#699" />
            <path d={`M${x - 12} ${y}l10 -2 2 12 -6 0z`} fill="#666" />
          </g>
        ))}
        {bolts.map(([x, y]) => (
          <g key={`${x}-${y}`}>
            <path d={`M${x - 22} ${y - 14}q20 -10 38 0l4 14 -10 0q-10 -12 -32 -14z`} fill="#333" />
            <path d={`M${x - 10} ${y}l8 -4 6 28 -8 -6zM${x + 6} ${y}l14 -2v18l-16 8z`} fill="#666" />
            <path d={`M${x - 6} ${y - 8}q10 10 8 32`} fill="none" stroke="#333" strokeWidth="3" />
          </g>
        ))}

        {/* Spin centre */}
        <path d="M634 777L597 827" stroke="#6cf" strokeWidth="4" />
        <path d="M634 785L672 809" stroke="#903" strokeWidth="4" />
        <circle cx="634" cy="777" r="9" fill="#0f0" />
        <circle cx="597" cy="828" r="7" fill="#6cf" />
        <circle cx="672" cy="810" r="7" fill="#903" />
      </g>
    </svg>
  );
}

/* ---------- Graphics toolbar ---------- */

const Lens = ({ sign }: { sign?: string }) => (
  <>
    <circle cx="8" cy="7" r="5" fill="#fff" stroke="#555" strokeWidth="1.200" />
    <path d="M12 11l5 5" stroke="#963" strokeWidth="2.500" />
    {sign && <path d={sign} stroke="#222" strokeWidth="1.500" />}
  </>
);

const Eye = () => (
  <>
    <path d="M6 14q5-5 10 0-5 4-10 0z" fill="#bbb" stroke="#666" />
    <circle cx="11" cy="14" r="1.800" fill="#36c" />
  </>
);

const viewTools: { name: string; art: ReactNode; active?: boolean }[] = [
  { name: '重新调整', art: <><path d="M1.500 1.500h14v13h-14z" fill="#fff" stroke="#039" /><path d="M1 1h15v2H1z" fill="#039" /><Lens /></> },
  { name: '放大', art: <Lens sign="M5 7h6M8 4v6" /> },
  { name: '缩小', art: <Lens sign="M5 7h6" /> },
  { name: '重画', art: <><path d="M2.500 2.500h13v13h-13z" fill="#fff" stroke="#039" /><path d="M2 2h14v2H2z" fill="#039" /><path d="M15 5v10H9z" fill="#cdf" /><path d="M5 14l3-6 5-3-2 6z" fill="#9bd" /><path d="M8 12l4-5" stroke="#036" /></> },
  { name: '显示样式', art: <><path d="M2 5.500l3-3h9.500l-2 3z" fill="#9ff" stroke="#699" /><path d="M12 6l3-3v8l-3 4z" fill="#099" /><path d="M1.500 5.500h11v9h-11z" fill="#fff" stroke="#999" /><path d="M18 14v4h-4z" fill="#666" /></> },
  { name: '已命名视图', art: <><path d="M.5 14V8.500l2-3H6" stroke="#999" strokeWidth="1.300" /><path d="M7 8V3l1-2h1l1 2v5M7 5.500h3M12.500 8V1.500h3v3h-3M12.500 4.500h3.500v3h-3.500" stroke="#222" /><path d="M11 10h2v4h-2z" fill="#099" /><path d="M18 14v4h-4z" fill="#666" /></> },
  { name: '视图管理器', art: <><path d="M1.500 1.500h12v14h-12zM3 4.500h2M3 8.500h2M3 12.500h2M7 4.500h5" stroke="#888" /><path d="M6 8h3V6h4v2h4v8H6z" fill="#aaa" stroke="#333" /><circle cx="11.500" cy="12" r="2.500" fill="#fff" stroke="#333" /></> },
  { name: '基准显示过滤器', art: <><path d="M1 2l4 4M5 2L1 6M8 2l3 3M11 2L8 5M15 1L3 16M11 10l5 5M16 10l-6 6M13 8v8" stroke="#963" strokeWidth="1.400" /><path d="M18 14v4h-4z" fill="#666" /></> },
  { name: '点显示', art: <><path d="M8 8V1M8 8l5-6M8 8l6 0M8 8H3M8 8l-4 6M3 3l5 5" stroke="#963" /><path d="M0 1l3 3M3 1L0 4M13 5l3 3M16 5l-3 3M1 12h3l-3 4h3" stroke="#888" /><Eye /></> },
  { name: '注释显示', art: <><path d="M1.500 1.500h8v4h-8z" fill="#ff9" stroke="#993" /><path d="M10 4.500h4M11 6.500h3l-3 5h4" stroke="#333" /><Eye /></> },
  { name: '旋转中心', active: true, art: <><path d="M5 4l3 4h6M8 9l-4 5" stroke="#444" strokeWidth="1.300" /><circle cx="5" cy="3" r="3" fill="#3c3" /><circle cx="15" cy="8" r="2.500" fill="#c00" /><circle cx="4" cy="14" r="2.500" fill="#0cc" /></> },
];

function ViewToolbar() {
  return (
    <div className="relative mt-[7px] flex h-7 border border-[#ccc] bg-white px-[5px]">
      {viewTools.map(tool => (
        <button
          key={tool.name}
          type="button"
          aria-label={tool.name}
          className={`flex w-[27px] items-center justify-center border-l border-[#ccc] ${tool.active ? 'border-t-2 border-t-[#999] bg-linear-to-b from-[#ccc] via-[#eef] to-[#ccc]' : ''}`}
        >
          <svg viewBox="0 0 18 18" className="h-[18px] w-[18px]" fill="none" aria-hidden="true">{tool.art}</svg>
        </button>
      ))}
      <div className="w-px bg-[#ccc]" />
    </div>
  );
}

/* ---------- Status bar ---------- */

function StatusBar() {
  return (
    <footer className="flex h-[38px] shrink-0 items-start border-t-2 border-[#999] pr-[11px]">
      <button type="button" aria-label="导航器" className="mt-2.5 ml-0.5 flex h-[22px] w-[22px] items-center justify-center border border-t-2 border-[#ccc] border-t-[#999] bg-linear-to-b from-[#eee] via-[#ddf] to-[#ccc]"><TreeTabIcon /></button>
      <button type="button" aria-label="浏览器" className="mt-2.5 ml-1 flex h-[22px] w-[22px] items-center justify-center border border-[#ccc]">
        <svg viewBox="0 0 18 18" className="h-[18px] w-[18px]" fill="none" aria-hidden="true">
          <circle cx="9" cy="9" r="7" fill="#09c" />
          <path d="M4 6l4-3 4 0 1 3-5 4-3-1zM10 10l5-1-2 5-3 2z" fill="#396" />
          <path d="M6 4l3-1M7 6l4-1" stroke="#9ff" />
          <ellipse cx="9" cy="9" rx="9" ry="4" stroke="#c93" strokeWidth="1.500" transform="rotate(-45 9 9)" />
        </svg>
      </button>
      <div className="mt-2.5 ml-[9px] h-[22px] w-px bg-[#ccc]" />
      <svg viewBox="0 0 6 6" className="mt-3 ml-1.5 h-1.5 w-1.5" aria-hidden="true"><circle cx="3" cy="3" r="2.500" fill="#00f" /></svg>
      <p className="mt-1.5 ml-[11px] flex-1 text-[11px] leading-4">将显示着色模型</p>
      <div className="mt-0.5 h-[30px] w-px bg-[#ccc]" />
      <div className="mt-0.5 ml-[35px] h-[30px] w-px bg-[#ccc]" />
      <div className="mt-3 ml-[3px] flex w-7 items-center gap-0.5">
        <span className="h-3 w-3 rounded-full bg-[#3c3]" />
        <span className="h-1.5 w-1.5 rounded-full bg-[#ccc]" />
        <span className="h-1.5 w-1.5 rounded-full bg-[#ccc]" />
      </div>
      <div className="mt-0.5 h-[30px] w-px bg-[#ccc]" />
      <button type="button" aria-label="搜索工具" className="mt-1 ml-[3px] flex h-7 w-10 items-center justify-center rounded-sm border border-[#ccc] border-b-[#99c]"><BinocularsIcon /></button>
      <div className="mt-0.5 ml-0.5 h-[30px] w-px bg-[#ccc]" />
      <button type="button" aria-label="选择框" className="mt-1 ml-[3px] flex h-7 w-10 items-center justify-center rounded-sm border border-[#ccc] border-b-[#99c]">
        <svg viewBox="0 0 18 18" className="h-[18px] w-[18px]" fill="none" shapeRendering="crispEdges" aria-hidden="true">
          <path d="M1.500 6.500l4-4h11v9l-4 5h-11zM1.500 6.500h11v10M12.500 6.500l4-4" stroke="#000" />
          <path d="M4 9h3v4H4z" fill="#ff0" />
          <path d="M7 9h2v3H7z" fill="#0cf" />
        </svg>
      </button>
      <div className="relative mt-2 ml-24 flex h-[19px] w-[166px] border border-[#ccc]">
        <select aria-label="选择过滤器" className="w-full appearance-none bg-white pb-0.5 pl-1 text-xs leading-4 outline-none" defaultValue="智能">
          <option>智能</option>
        </select>
        <span className="pointer-events-none absolute inset-y-0 right-0 flex w-3.5 items-center justify-center border-l border-[#ccc]">
          <Caret />
        </span>
      </div>
    </footer>
  );
}

export default function App() {
  return (
    <div className='flex min-h-screen flex-col border border-black bg-white font-["Noto_Sans_CJK_SC",sans-serif] text-xs text-[#333]'>
      <TabRow />
      <Ribbon />
      <QuickAccess />
      <div className="flex flex-1">
        <Navigator />
        <main className="relative flex flex-1 items-start justify-center overflow-hidden">
          <EngineModel />
          <ViewToolbar />
        </main>
      </div>
      <StatusBar />
    </div>
  );
}
